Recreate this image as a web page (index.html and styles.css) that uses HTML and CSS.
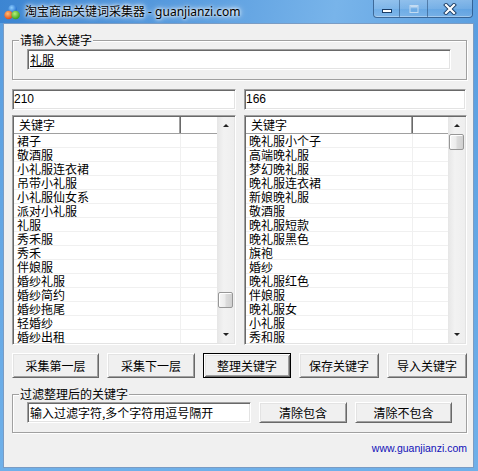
FILE: index.html
```html
<!DOCTYPE html>
<html lang="zh-CN">
<head>
<meta charset="utf-8">
<title>淘宝商品关键词采集器</title>
<link rel="stylesheet" href="styles.css">
</head>
<body>
<div class="window">
  <div class="titlebar">
    <svg class="app-icon" width="16" height="16" viewBox="0 0 16 16">
      <defs>
        <radialGradient id="gb" cx="0.4" cy="0.35" r="0.7"><stop offset="0" stop-color="#8fd0ff"/><stop offset="1" stop-color="#1763c8"/></radialGradient>
        <radialGradient id="gr" cx="0.4" cy="0.35" r="0.7"><stop offset="0" stop-color="#ffc07a"/><stop offset="1" stop-color="#e0400c"/></radialGradient>
        <radialGradient id="gg" cx="0.4" cy="0.35" r="0.7"><stop offset="0" stop-color="#b6f07a"/><stop offset="1" stop-color="#2f9a14"/></radialGradient>
      </defs>
      <circle cx="8.5" cy="5" r="4.3" fill="url(#gb)"/>
      <circle cx="4.6" cy="11" r="4.3" fill="url(#gr)"/>
      <circle cx="11.6" cy="11" r="4.3" fill="url(#gg)"/>
    </svg>
    <div class="title-text">淘宝商品关键词采集器 - guanjianzi.com</div>
    <div class="caption-buttons">
      <div class="cap cap-min">
        <svg width="12" height="6" viewBox="0 0 12 6"><rect x="1.5" y="1.5" width="9" height="3" fill="#fff" stroke="#1b3d66" stroke-width="1"/></svg>
      </div>
      <div class="cap cap-max">
        <svg width="12" height="10" viewBox="0 0 12 10"><rect x="2" y="1.5" width="8" height="7" fill="none" stroke="#c4dcf2" stroke-width="1"/><rect x="2.5" y="2" width="7" height="1.5" fill="#c4dcf2"/></svg>
      </div>
      <div class="cap cap-close">
        <svg width="14" height="12" viewBox="0 0 14 12"><path d="M3 2 L11 10 M11 2 L3 10" stroke="#1b3d66" stroke-width="4" stroke-linecap="square"/><path d="M3 2 L11 10 M11 2 L3 10" stroke="#fff" stroke-width="2.2" stroke-linecap="square"/></svg>
      </div>
    </div>
  </div>

  <div class="client">
    <div class="group group-top">
      <span class="group-title">请输入关键字</span>
      <div class="group-body">
        <div class="textbox textbox-keyword"><span class="composing">礼服</span></div>
      </div>
    </div>

    <div class="two-col counts">
      <div class="textbox">210</div>
      <div class="textbox">166</div>
    </div>

    <div class="two-col lists">
      <div class="listview">
        <div class="lv-main">
          <div class="lv-header">
            <div class="lv-hcell c1">关键字</div>
            <div class="lv-hcell c2"></div>
          </div>
          <div class="lv-row"><div class="c1">裙子</div><div class="c2"></div></div>
          <div class="lv-row"><div class="c1">敬酒服</div><div class="c2"></div></div>
          <div class="lv-row"><div class="c1">小礼服连衣裙</div><div class="c2"></div></div>
          <div class="lv-row"><div class="c1">吊带小礼服</div><div class="c2"></div></div>
          <div class="lv-row"><div class="c1">小礼服仙女系</div><div class="c2"></div></div>
          <div class="lv-row"><div class="c1">派对小礼服</div><div class="c2"></div></div>
          <div class="lv-row"><div class="c1">礼服</div><div class="c2"></div></div>
          <div class="lv-row"><div class="c1">秀禾服</div><div class="c2"></div></div>
          <div class="lv-row"><div class="c1">秀禾</div><div class="c2"></div></div>
          <div class="lv-row"><div class="c1">伴娘服</div><div class="c2"></div></div>
          <div class="lv-row"><div class="c1">婚纱礼服</div><div class="c2"></div></div>
          <div class="lv-row"><div class="c1">婚纱简约</div><div class="c2"></div></div>
          <div class="lv-row"><div class="c1">婚纱拖尾</div><div class="c2"></div></div>
          <div class="lv-row"><div class="c1">轻婚纱</div><div class="c2"></div></div>
          <div class="lv-row"><div class="c1">婚纱出租</div><div class="c2"></div></div>
        </div>
        <div class="scrollbar">
          <div class="sb-arrow"><span class="tri-up"></span></div>
          <div class="sb-track"><div class="sb-thumb" style="margin-top:158px"></div></div>
          <div class="sb-arrow"><span class="tri-down"></span></div>
        </div>
      </div>

      <div class="listview">
        <div class="lv-main">
          <div class="lv-header">
            <div class="lv-hcell c1">关键字</div>
            <div class="lv-hcell c2"></div>
          </div>
          <div class="lv-row"><div class="c1">晚礼服小个子</div><div class="c2"></div></div>
          <div class="lv-row"><div class="c1">高端晚礼服</div><div class="c2"></div></div>
          <div class="lv-row"><div class="c1">梦幻晚礼服</div><div class="c2"></div></div>
          <div class="lv-row"><div class="c1">晚礼服连衣裙</div><div class="c2"></div></div>
          <div class="lv-row"><div class="c1">新娘晚礼服</div><div class="c2"></div></div>
          <div class="lv-row"><div class="c1">敬酒服</div><div class="c2"></div></div>
          <div class="lv-row"><div class="c1">晚礼服短款</div><div class="c2"></div></div>
          <div class="lv-row"><div class="c1">晚礼服黑色</div><div class="c2"></div></div>
          <div class="lv-row"><div class="c1">旗袍</div><div class="c2"></div></div>
          <div class="lv-row"><div class="c1">婚纱</div><div class="c2"></div></div>
          <div class="lv-row"><div class="c1">晚礼服红色</div><div class="c2"></div></div>
          <div class="lv-row"><div class="c1">伴娘服</div><div class="c2"></div></div>
          <div class="lv-row"><div class="c1">晚礼服女</div><div class="c2"></div></div>
          <div class="lv-row"><div class="c1">小礼服</div><div class="c2"></div></div>
          <div class="lv-row"><div class="c1">秀和服</div><div class="c2"></div></div>
        </div>
        <div class="scrollbar">
          <div class="sb-arrow"><span class="tri-up"></span></div>
          <div class="sb-track"><div class="sb-thumb" style="margin-top:0px"></div></div>
          <div class="sb-arrow"><span class="tri-down"></span></div>
        </div>
      </div>
    </div>

    <div class="button-row">
      <div class="btn w87">采集第一层</div>
      <div class="btn w88">采集下一层</div>
      <div class="btn w88 default">整理关键字</div>
      <div class="btn w80">保存关键字</div>
      <div class="btn w80">导入关键字</div>
    </div>

    <div class="group group-filter">
      <span class="group-title">过滤整理后的关键字</span>
      <div class="group-body filter-body">
        <div class="textbox textbox-filter">输入过滤字符,多个字符用逗号隔开</div>
        <div class="btn w88 small">清除包含</div>
        <div class="btn w97 small">清除不包含</div>
      </div>
    </div>

    <div class="footer">
      <span class="site-link">www.guanjianzi.com</span>
    </div>
  </div>
</div>
</body>
</html>
```

FILE: styles.css
```css
* { box-sizing: border-box; }

html, body {
  margin: 0;
  padding: 0;
  background: #ffffff;
}

body {
  font-family: "Noto Sans CJK SC", "Noto Sans", sans-serif;
  font-size: 12px;
  color: #000;
}

.window {
  width: 478px;
  height: 471px;
  display: flex;
  flex-direction: column;
  background: linear-gradient(to bottom, #4289d3 0px, #5a9ee0 23px, #63a6e4 200px, #6fb0e9 100%);
}

/* ---------- Title bar ---------- */
.titlebar {
  height: 23px;
  display: flex;
  align-items: flex-start;
  background: linear-gradient(100deg, #3c85d2 0%, #5a9ddf 40%, #78b4ea 70%, #5b9fe0 100%);
}

.app-icon {
  margin: 4px 0 0 4px;
  flex: none;
}

.title-text {
  margin-left: 5px;
  font-family: "Noto Sans", "Noto Sans CJK SC", sans-serif;
  font-size: 12px;
  line-height: 23px;
  color: #000;
  white-space: nowrap;
  text-shadow: 0 0 5px #fff, 0 0 3px #fff, 0 0 8px rgba(255,255,255,0.8);
}

.caption-buttons {
  margin-left: auto;
  margin-right: 5px;
  display: flex;
  height: 18px;
  border: 1px solid rgba(20, 50, 90, 0.55);
  border-top: none;
  border-radius: 0 0 4px 4px;
  overflow: hidden;
  box-shadow: inset 0 -1px 0 rgba(255,255,255,0.35);
}

.cap {
  display: flex;
  align-items: center;
  justify-content: center;
  background: linear-gradient(to bottom, rgba(255,255,255,0.25) 0%, rgba(255,255,255,0.12) 50%, rgba(255,255,255,0.02) 51%, rgba(255,255,255,0.12) 100%);
}

.cap-min { width: 26px; border-right: 1px solid rgba(20,50,90,0.45); padding-top: 4px; }
.cap-max { width: 28px; border-right: 1px solid rgba(20,50,90,0.45); }
.cap-close { width: 44px; }

/* ---------- Client area ---------- */
.client {
  flex: 1;
  margin: 0 4px 3px 3px;
  border: 1px solid #7a9cc4;
  background: #f0f0f0;
  padding: 0 6px 0 8px;
  display: flex;
  flex-direction: column;
}

/* group boxes */
.group {
  border: 1px solid #a0a0a0;
  box-shadow: inset 1px 1px 0 #fff, 1px 1px 0 #fff;
  display: flex;
  flex-direction: column;
}

.group-top { margin-top: 16px; padding: 0 15px 9px 14px; }
.group-filter { margin-top: 16px; padding: 0 15px 9px 14px; }

.group-title {
  align-self: flex-start;
  margin: -8px 0 0 -8px;
  padding: 0 1px;
  line-height: 14px;
  height: 14px;
  background: #f0f0f0;
  white-space: nowrap;
}

.group-top .group-body { margin-top: 2px; display: flex; }
.filter-body { margin-top: 1px; display: flex; gap: 8px; }

/* text boxes */
.textbox {
  height: 21px;
  background: #fff;
  border: 1px solid;
  border-color: #a0a0a0 #ffffff #ffffff #a0a0a0;
  box-shadow: inset 1px 1px 0 #696969, inset -1px -1px 0 #e3e3e3;
  padding: 0 2px;
  line-height: 19px;
  white-space: nowrap;
  overflow: hidden;
}

.textbox-keyword { flex: 1; padding-left: 2px; }
.composing { text-decoration: underline; text-underline-offset: 1px; }

.textbox-filter { width: 224px; flex: none; }

.two-col {
  display: grid;
  grid-template-columns: 224px 1fr;
  column-gap: 8px;
}

.counts { margin-top: 9px; }
.counts .textbox { font-family: "Liberation Sans", sans-serif; font-size: 12px; padding-left: 1px; }
.counts .textbox:last-child { margin-right: 1px; }

/* list views */
.lists { margin-top: 5px; }

.listview {
  height: 230px;
  border: 1px solid;
  border-color: #a0a0a0 #ffffff #ffffff #a0a0a0;
  box-shadow: inset 1px 1px 0 #696969, inset -1px -1px 0 #e3e3e3;
  padding: 1px;
  display: flex;
  overflow: hidden;
}

.lv-main {
  flex: 1;
  background: #fff;
  overflow: hidden;
}

.lv-header {
  height: 17px;
  display: flex;
  background: #fff;
  border-bottom: 1px solid #a0a0a0;
}

.lv-hcell {
  height: 16px;
  line-height: 15px;
}

.lv-hcell.c1 {
  width: 167px;
  padding-left: 5px;
  border-right: 1px solid #696969;
  box-shadow: inset -1px 0 0 #a0a0a0;
}

.lv-hcell.c2 { flex: 1; }

.lv-row {
  height: 14px;
  display: flex;
  border-bottom: 1px solid #f0f0f0;
}

.lv-row .c1 {
  width: 167px;
  padding-left: 3px;
  border-right: 1px solid #f0f0f0;
  line-height: 13px;
  white-space: nowrap;
}

.lv-row .c2 { flex: 1; }

/* scrollbars */
.scrollbar {
  width: 17px;
  flex: none;
  display: flex;
  flex-direction: column;
  background: linear-gradient(to right, #e6e6e6, #f2f2f2 40%, #eeeeee);
}

.sb-arrow {
  height: 17px;
  flex: none;
  display: flex;
  align-items: center;
  justify-content: center;
}

.tri-up, .tri-down {
  width: 0;
  height: 0;
  border-left: 3px solid transparent;
  border-right: 3px solid transparent;
}
.tri-up { border-bottom: 3px solid #222; }
.tri-down { border-top: 3px solid #222; }

.sb-track {
  flex: 1;
  display: flex;
  flex-direction: column;
  align-items: center;
}

.sb-thumb {
  width: 15px;
  height: 16px;
  border: 1px solid #979797;
  border-radius: 2px;
  background: linear-gradient(to right, #f6f6f6 0%, #ececec 45%, #dcdcdc 55%, #d0d0d0 100%);
  box-shadow: inset 1px 1px 0 #fff;
}

/* buttons */
.button-row {
  margin-top: 8px;
  display: flex;
  justify-content: space-between;
}

.btn {
  height: 25px;
  flex: none;
  display: flex;
  align-items: center;
  justify-content: center;
  background: #f0f0f0;
  border: 1px solid;
  border-color: #ffffff #696969 #696969 #ffffff;
  box-shadow: inset 1px 1px 0 #e3e3e3, inset -1px -1px 0 #a0a0a0;
  white-space: nowrap;
}

.btn.default {
  border-color: #000;
  box-shadow: inset 1px 1px 0 #fff, inset -1px -1px 0 #696969, inset 2px 2px 0 #e3e3e3, inset -2px -2px 0 #a0a0a0;
}

.btn.small { height: 21px; }

.w80 { width: 80px; }
.w87 { width: 87px; }
.w88 { width: 88px; }
.w97 { width: 97px; }

/* footer link */
.footer {
  margin-top: 8px;
  display: flex;
  justify-content: flex-end;
  padding-right: 0;
}

.site-link {
  font-family: "Liberation Sans", "DejaVu Sans", sans-serif;
  font-size: 10.5px;
  line-height: 14px;
  color: #1010b8;
}
```
